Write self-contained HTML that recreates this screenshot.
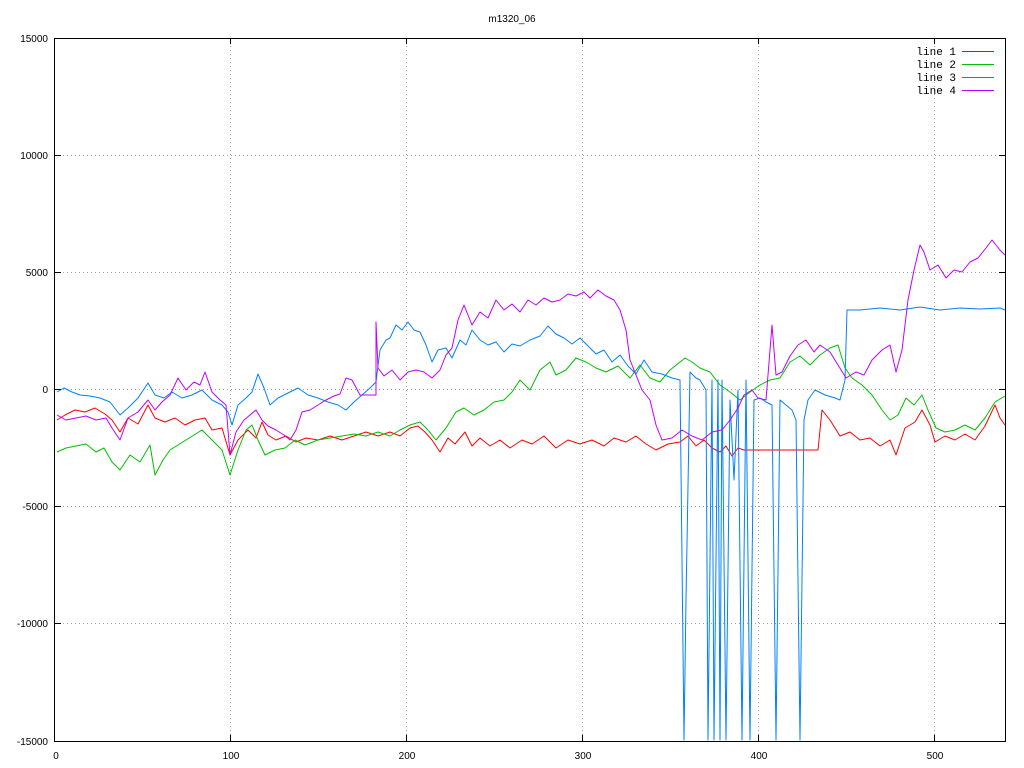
<!DOCTYPE html>
<html><head><meta charset="utf-8"><style>
html,body{margin:0;padding:0;background:#fff;width:1024px;height:768px;overflow:hidden}
svg{display:block}
text{font-family:"Liberation Sans",sans-serif;font-size:10px;fill:#000}
.m{font-family:"Liberation Mono",monospace;font-size:11px}
</style></head><body>
<svg width="1024" height="768" viewBox="0 0 1024 768" xmlns="http://www.w3.org/2000/svg">
<rect width="1024" height="768" fill="#fff"/>
<g stroke="#a0a0a0" stroke-width="1" stroke-dasharray="1,3" fill="none">
<path d="M55 155.5H1005M55 272.5H1005M55 389.5H1005M55 506.5H1005M55 623.5H1005"/>
<path d="M230.5 38V741M406.5 38V741M582.5 38V741M758.5 38V741M934.5 38V741"/>
</g>
<g stroke="#000" stroke-width="1" fill="none">
<rect x="54.5" y="38.5" width="951" height="703"/>
<path d="M55 155.5h6M55 272.5h6M55 389.5h6M55 506.5h6M55 623.5h6M1005 155.5h-6M1005 272.5h-6M1005 389.5h-6M1005 506.5h-6M1005 623.5h-6"/>
<path d="M230.5 741v-6M406.5 741v-6M582.5 741v-6M758.5 741v-6M934.5 741v-6M230.5 38v6M406.5 38v6M582.5 38v6M758.5 38v6M934.5 38v6"/>
</g>
<text x="512" y="22" text-anchor="middle">m1320_06</text>
<g text-anchor="end">
<text x="48" y="42">15000</text><text x="48" y="159">10000</text><text x="48" y="276">5000</text>
<text x="48" y="393">0</text><text x="48" y="510">-5000</text><text x="48" y="627">-10000</text><text x="48" y="745">-15000</text>
</g>
<g text-anchor="middle">
<text x="56" y="759">0</text><text x="231" y="759">100</text><text x="407" y="759">200</text>
<text x="583" y="759">300</text><text x="759" y="759">400</text><text x="935" y="759">500</text>
</g>
<g class="m" text-anchor="end">
<text class="m" x="956" y="55">line 1</text><text class="m" x="956" y="68">line 2</text>
<text class="m" x="956" y="81">line 3</text><text class="m" x="956" y="94">line 4</text>
</g>
<path d="M962 51.5h32" stroke="#ff0000"/><path d="M962 64.5h32" stroke="#00c000"/>
<path d="M962 77.5h32" stroke="#0080ff"/><path d="M962 90.5h32" stroke="#c000ff"/>
<g fill="none" stroke-width="1" stroke-linejoin="round">
<path stroke="#ff0000" d="M57 420L65 415L75 410L85 412L95 408L105 414L112 420L120 432L128 418L138 424L148 405L155 418L165 422L175 418L185 425L195 420L205 418L212 430L222 428L230 455L238 440L248 430L256 438L262 422L268 435L276 440L286 436L296 442L306 438L318 440L330 436L342 440L354 436L366 432L378 436L390 432L400 436L410 428L418 426L425 432L432 440L440 452L448 438L455 444L465 432L472 446L480 438L490 446L500 440L510 448L522 440L532 444L544 436L556 448L568 440L580 444L592 440L604 446L614 438L626 442L636 436L646 444L656 450L668 444L680 442L688 436L696 446L704 440L712 448L720 452L726 446L732 456L738 448L744 450L818 450L822 410L830 420L840 436L850 432L860 440L870 438L880 446L890 440L896 455L905 428L915 422L922 410L930 425L935 442L945 436L955 440L965 434L975 440L985 426L995 405L1000 418L1005 425"/>
<path stroke="#00c000" d="M57 452L66 448L76 446L86 444L96 452L104 448L112 462L120 470L130 455L140 462L150 445L155 475L163 460L170 450L178 445L186 440L194 435L202 430L212 440L222 450L230 475L238 450L246 430L252 425L258 440L265 455L275 450L285 448L295 440L305 445L318 440L330 438L342 436L354 434L366 436L378 432L390 436L400 430L410 425L420 422L428 430L436 440L446 428L456 412L464 408L474 415L484 410L494 402L504 400L512 392L520 380L530 390L540 370L550 362L556 375L566 370L576 358L586 362L596 368L606 372L618 366L630 378L640 365L650 378L660 382L670 370L685 358L692 362L700 368L710 372L720 385L730 392L740 400L750 392L760 385L770 380L780 378L790 362L800 356L810 365L820 355L830 348L838 345L845 368L852 378L862 385L872 395L882 410L890 420L898 415L906 398L914 405L922 395L928 410L936 428L945 432L955 430L965 425L975 430L985 418L995 402L1005 396"/>
<path stroke="#0080ff" d="M57 392L64 388L72 392L80 395L90 396L100 398L110 402L120 415L128 408L138 398L148 383L155 395L164 398L172 392L182 398L192 395L202 390L212 400L222 405L228 412L232 425L238 405L246 398L252 392L258 374L264 388L270 405L278 398L288 393L298 388L308 395L318 398L328 402L338 405L346 410L354 402L362 395L370 388L376 382L380 350L386 340L390 338L396 325L402 330L408 322L414 330L420 332L426 345L432 362L438 350L446 348L452 358L460 340L466 345L472 330L480 340L488 345L496 342L504 352L512 344L520 346L530 340L540 336L548 326L556 334L564 338L572 344L580 338L588 346L596 354L604 350L612 362L620 355L628 366L636 374L644 360L652 372L662 374L672 378L680 380L684 740L686 600L690 372L696 378L700 380L706 390L708 740L712 380L714 740L718 380L720 740L722 380L726 740L730 400L734 480L738 390L742 740L746 380L750 740L754 400L760 398L766 402L772 405L776 740L780 400L786 405L792 410L796 420L800 740L804 420L808 400L815 390L825 395L835 398L840 400L845 380L847 310L860 310L880 308L900 310L920 307L940 310L960 308L980 309L1000 308L1005 310"/>
<path stroke="#c000ff" d="M57 415L66 420L76 418L86 416L96 420L106 418L112 428L120 440L128 418L138 412L148 400L155 410L162 402L170 395L178 378L186 390L194 382L200 385L205 372L212 392L220 400L226 405L230 455L236 432L244 420L250 415L256 410L262 420L268 426L276 430L284 435L290 440L296 430L302 412L310 410L318 405L326 400L334 396L340 394L346 378L352 380L360 395L376 395L376 322L378 368L384 376L392 370L400 380L408 372L416 370L424 372L432 378L440 370L446 355L452 348L458 320L464 305L472 325L480 312L488 318L496 300L504 310L512 304L520 312L528 300L536 305L544 298L552 302L560 300L568 294L576 296L584 292L590 298L598 290L606 296L614 300L620 310L626 330L630 360L636 375L642 390L650 400L656 425L662 440L672 438L682 430L692 436L702 440L712 432L722 430L730 420L738 408L744 395L752 390L758 398L766 400L772 325L776 375L782 372L790 356L798 345L806 340L814 352L820 345L830 352L838 365L846 378L856 372L864 375L872 360L882 350L890 345L896 372L902 350L908 300L914 270L920 245L924 252L930 270L938 265L946 278L954 270L962 272L970 262L978 258L986 248L992 240L1000 250L1005 255"/>
</g>
</svg>
</body></html>
